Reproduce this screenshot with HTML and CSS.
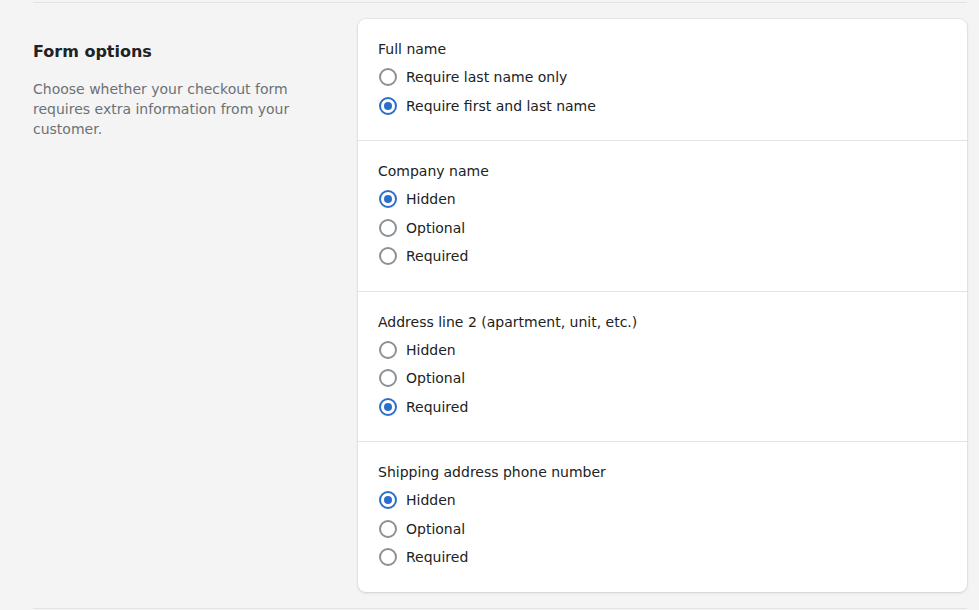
FILE: index.html
```html
<!DOCTYPE html>
<html>
<head>
<meta charset="utf-8">
<link rel="stylesheet" href="styles.css">
</head>
<body>
<div class="page">
  <section class="layout">
    <div class="annotation">
      <h2 class="title">Form options</h2>
      <p class="desc">Choose whether your checkout form requires extra information from your customer.</p>
    </div>
    <div class="card">
      <div class="group">
        <div class="label">Full name</div>
        <div class="row"><span class="radio"></span><span>Require last name only</span></div>
        <div class="row"><span class="radio on"></span><span>Require first and last name</span></div>
      </div>
      <div class="group">
        <div class="label">Company name</div>
        <div class="row"><span class="radio on"></span><span>Hidden</span></div>
        <div class="row"><span class="radio"></span><span>Optional</span></div>
        <div class="row"><span class="radio"></span><span>Required</span></div>
      </div>
      <div class="group">
        <div class="label">Address line 2 (apartment, unit, etc.)</div>
        <div class="row"><span class="radio"></span><span>Hidden</span></div>
        <div class="row"><span class="radio"></span><span>Optional</span></div>
        <div class="row"><span class="radio on"></span><span>Required</span></div>
      </div>
      <div class="group">
        <div class="label">Shipping address phone number</div>
        <div class="row"><span class="radio on"></span><span>Hidden</span></div>
        <div class="row"><span class="radio"></span><span>Optional</span></div>
        <div class="row"><span class="radio"></span><span>Required</span></div>
      </div>
    </div>
  </section>
</div>
</body>
</html>
```
FILE: styles.css
```css
html, body {
  margin: 0;
  padding: 0;
  background: #f4f4f4;
}
body {
  font-family: "DejaVu Sans", sans-serif;
  font-size: 14px;
  line-height: 20px;
  color: #202223;
}
.page {
  padding: 2px 12px 0 33px;
}
.layout {
  display: grid;
  grid-template-columns: 305px 609px;
  column-gap: 20px;
  border-top: 1px solid #e1e3e5;
  border-bottom: 1px solid #e1e3e5;
  padding: 16px 0 16px;
}
.annotation {
  padding-top: 21px;
}
.title {
  margin: 0 0 15px;
  font-size: 16px;
  line-height: 24px;
  font-weight: bold;
  color: #202223;
}
.desc {
  margin: 0;
  color: #6d7175;
  width: 270px;
}
.card {
  background: #ffffff;
  border-radius: 8px;
  box-shadow: 0 0 0 1px rgba(63, 63, 68, 0.05), 0 1px 3px 0 rgba(63, 63, 68, 0.15);
}
.group {
  padding: 20px;
  border-top: 1px solid #e1e3e5;
}
.group:first-child {
  border-top: none;
}
.label {
  margin-bottom: 4px;
}
.row {
  display: flex;
  align-items: center;
  gap: 9px;
  height: 28.5px;
}
.radio {
  box-sizing: border-box;
  width: 18px;
  height: 18px;
  margin-left: 1px;
  border: 2px solid #8c9196;
  border-radius: 50%;
  display: flex;
  align-items: center;
  justify-content: center;
  flex: none;
}
.radio.on {
  border-color: #2c6ecb;
}
.radio.on::after {
  content: "";
  width: 8px;
  height: 8px;
  border-radius: 50%;
  background: #2c6ecb;
}
```
